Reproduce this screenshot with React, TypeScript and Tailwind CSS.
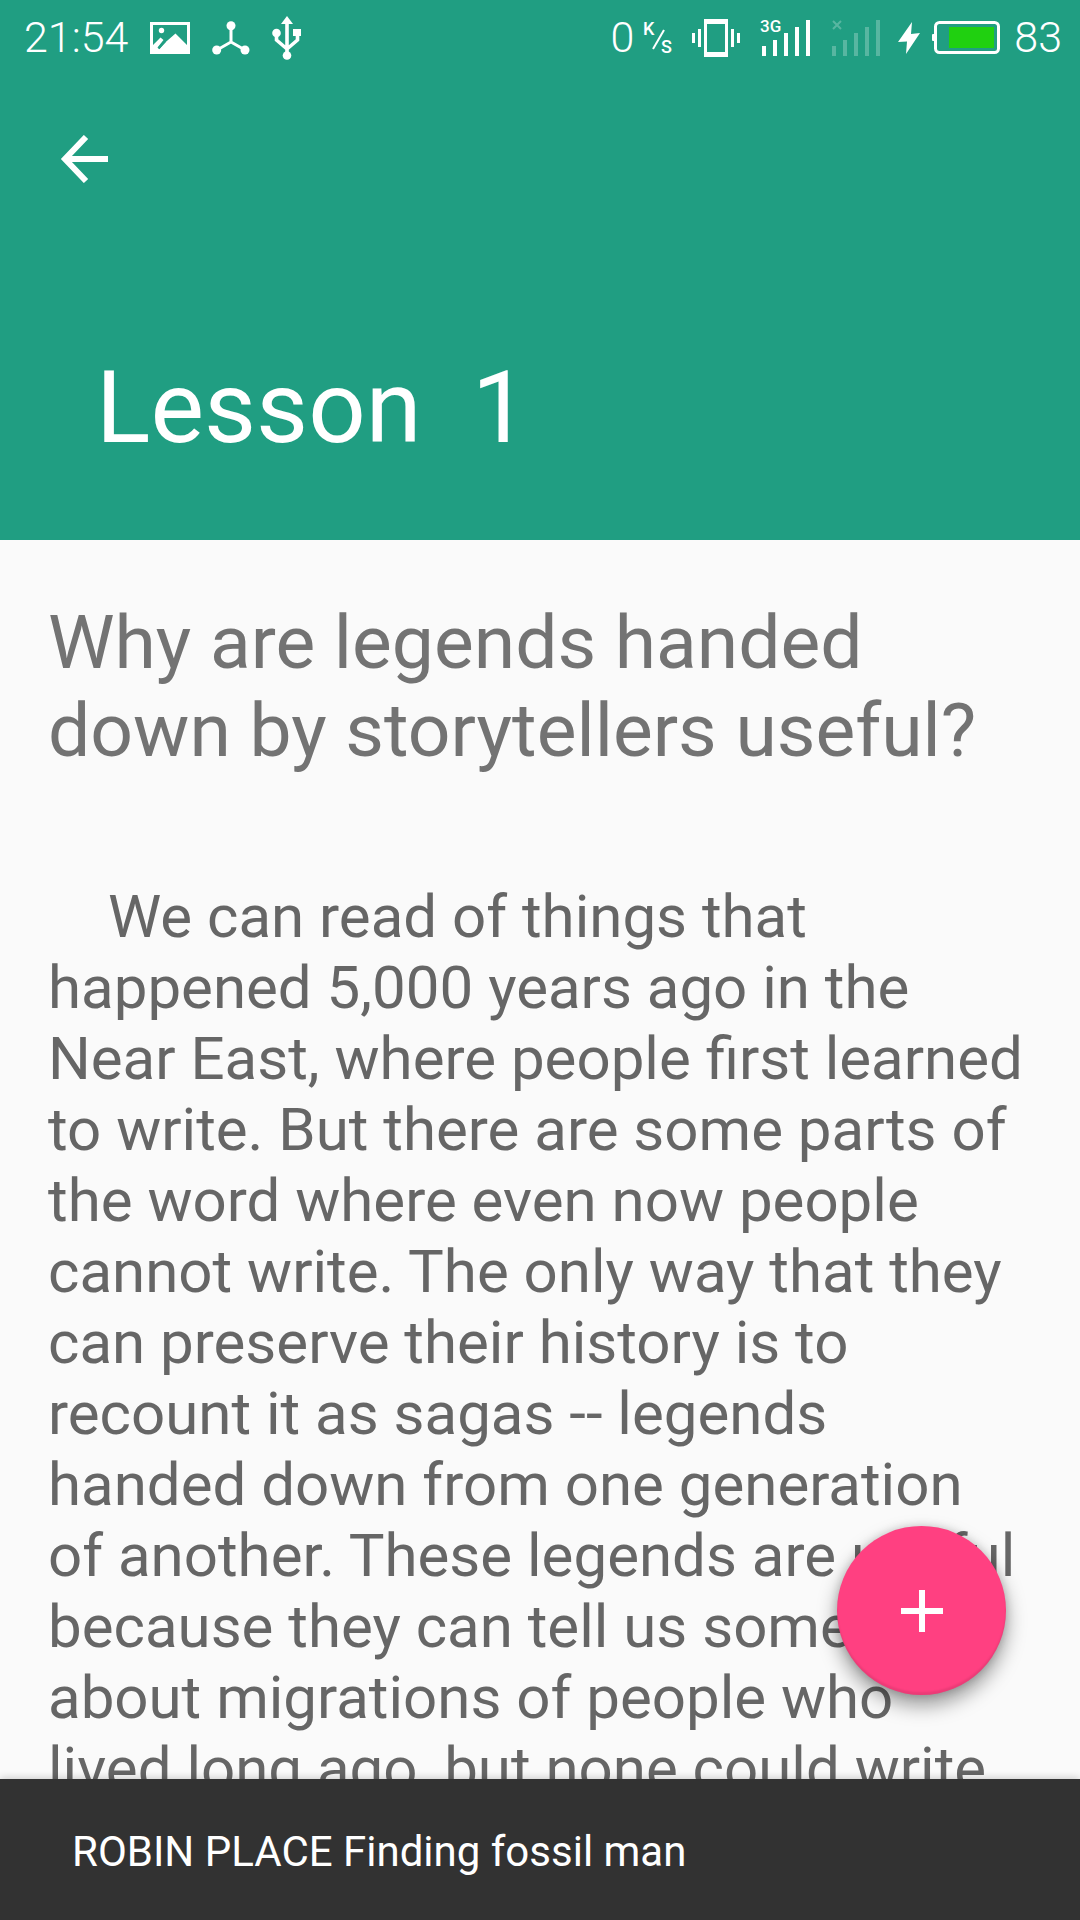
import React from "react";

function PictureIcon() {
  return (
    <svg width="40" height="32" viewBox="0 0 40 32" aria-hidden="true">
      <rect x="1.5" y="1.5" width="37" height="29" fill="none" stroke="#fff" strokeWidth="3" />
      <circle cx="11.5" cy="8.5" r="2.7" fill="#fff" />
      <path d="M2 24 L10.500 15.500 L13.500 18 L7.500 25.500 L9.500 27 L14 21.500 L25.500 11.500 L38 24 V30 H2 Z" fill="#fff" />
      <path d="M8.500 26.500 L15 19.500" stroke="#209e82" strokeWidth="2" />
    </svg>
  );
}

function NodesIcon() {
  return (
    <svg width="38" height="34" viewBox="0 0 38 34" fill="#fff" aria-hidden="true">
      <path d="M19 4.500 V21 L5 29 M19 21 L33 29" fill="none" stroke="#fff" strokeWidth="3" />
      <circle cx="19" cy="4.700" r="4.500" />
      <circle cx="4.700" cy="29" r="4.500" />
      <circle cx="33" cy="29" r="4.500" />
    </svg>
  );
}

function UsbIcon() {
  return (
    <svg width="30" height="44" viewBox="0 0 30 44" fill="#fff" aria-hidden="true">
      <path d="M15 0 L21 8 H9 Z" />
      <path d="M15 6 V40 M4.500 17 V24 L15 33 M25.500 17 V24 L15 33" fill="none" stroke="#fff" strokeWidth="3.600" />
      <circle cx="4.500" cy="17" r="4.300" />
      <rect x="21" y="13" width="8" height="7" />
      <circle cx="15" cy="39.500" r="4.300" />
    </svg>
  );
}

function SpeedUnit() {
  return (
    <svg width="32" height="42" viewBox="0 -4 32 42" fill="#fff" role="img" aria-label="K/s" className="font-medium">
      <text x="1" y="14" fontSize="18">K</text>
      <path d="M11 28 L22 9" stroke="#fff" strokeWidth="2" />
      <text x="19" y="32" fontSize="18">S</text>
    </svg>
  );
}

function VibrateIcon() {
  return (
    <svg width="48" height="38" viewBox="0 0 48 38" fill="#fff" aria-hidden="true">
      <path fillRule="evenodd" d="M12 0 H36 V38 H12 Z M15 5 V33 H33 V5 Z" />
      <rect x="0" y="14" width="3" height="10" />
      <rect x="6" y="10" width="3" height="18" />
      <rect x="39" y="10" width="3" height="18" />
      <rect x="45" y="14" width="3" height="10" />
    </svg>
  );
}

function SignalBars() {
  return (
    <g>
      <rect x="2" y="26" width="4" height="10" />
      <rect x="13" y="20" width="4" height="16" />
      <rect x="24" y="13" width="4" height="23" />
      <rect x="35" y="7" width="4" height="29" />
      <rect x="46" y="0" width="4" height="36" />
    </g>
  );
}

function BatteryIcon() {
  return (
    <svg width="68" height="34" viewBox="0 0 68 34" aria-hidden="true">
      <rect x="3.500" y="1.500" width="63" height="30" rx="4" fill="none" stroke="#fff" strokeWidth="3" />
      <rect x="0" y="13" width="3" height="7" rx="1" fill="#fff" />
      <rect x="17" y="6" width="45" height="21" fill="#20d010" />
    </svg>
  );
}

function StatusBar() {
  return (
    <div className="flex h-[75px] items-center justify-between pr-[18px] pl-6 text-[43px] font-light">
      <div className="flex items-center">
        <span>21:54</span>
        <div className="ml-[22px] flex items-center gap-[22px]">
          <PictureIcon />
          <NodesIcon />
          <UsbIcon />
        </div>
      </div>
      <div className="flex items-center">
        <span className="mr-2">0</span>
        <SpeedUnit />
        <div className="ml-[18px] flex items-center gap-5">
          <VibrateIcon />
          <svg width="50" height="52" viewBox="0 -8 50 52" fill="#fff" role="img" aria-label="3G signal" className="font-medium">
            <text x="0" y="12" fontSize="17">3G</text>
            <SignalBars />
          </svg>
          <svg width="50" height="36" viewBox="0 0 50 36" fill="#fff" className="opacity-25" aria-hidden="true">
            <path d="M3 1 L11 9 M11 1 L3 9" stroke="#fff" strokeWidth="2" />
            <SignalBars />
          </svg>
        </div>
        <svg width="22" height="32" viewBox="0 0 22 32" fill="#fff" aria-hidden="true" className="mr-3 ml-[18px]">
          <path d="M14 0 L0 20 L9 19.500 L8 32 L22 11 L13 12 Z" />
        </svg>
        <BatteryIcon />
        <span className="ml-[14px]">83</span>
      </div>
    </div>
  );
}

export default function App() {
  return (
    <div className="flex h-screen flex-col bg-[#fafafa] font-['Roboto',sans-serif]">
      <header className="shrink-0 bg-[#209e82] text-white">
        <StatusBar />
        <button type="button" aria-label="Back" className="mt-[60px] ml-[60px] block">
          <svg width="48" height="48" viewBox="0 0 48 48" fill="none" stroke="#fff" strokeWidth="6" aria-hidden="true">
            <path d="M26 2 L5 24 L26 46 M6 24 H48" />
          </svg>
        </button>
        <h1 className="mt-[149px] pb-[56px] pl-24 text-[101px] leading-[152px] whitespace-pre">Lesson  1</h1>
      </header>

      <main className="relative min-h-0 flex-1">
        <article className="h-full overflow-hidden px-12 pt-[58px]">
          <h2 className="text-[75px] leading-[88px] text-[#737373]">
            Why are legends handed
            <br />
            down by storytellers useful?
          </h2>
          <p className="mt-[107px] text-[60px] leading-[71px] text-[#666]">
            <span className="inline-block w-[60px]" />
            We can read of things that
            <br />
            happened 5,000 years ago in the
            <br />
            Near East, where people first learned
            <br />
            to write. But there are some parts of
            <br />
            the word where even now people
            <br />
            cannot write. The only way that they
            <br />
            can preserve their history is to
            <br />
            recount it as sagas -- legends
            <br />
            handed down from one generation
            <br />
            of another. These legends are useful
            <br />
            because they can tell us something
            <br />
            about migrations of people who
            <br />
            lived long ago, but none could write
          </p>
        </article>
        <button
          type="button"
          aria-label="Add"
          className="absolute right-[74px] bottom-[84px] flex size-[169px] items-center justify-center rounded-full bg-[#ff4081] shadow-[0_10px_20px_rgba(0,0,0,0.4),0_0_8px_rgba(0,0,0,0.15),inset_0_-3px_2px_rgba(0,0,0,0.08)]"
        >
          <svg width="42" height="42" viewBox="0 0 42 42" stroke="#fff" strokeWidth="6" aria-hidden="true">
            <path d="M21 0 V42 M0 21 H42" />
          </svg>
        </button>
      </main>

      <footer className="relative flex h-[141px] shrink-0 items-center bg-[#323232] px-[72px] pt-1 text-[42px] text-white shadow-[0_-1px_8px_rgba(0,0,0,0.2)]">
        <p>ROBIN PLACE Finding fossil man</p>
      </footer>
    </div>
  );
}
